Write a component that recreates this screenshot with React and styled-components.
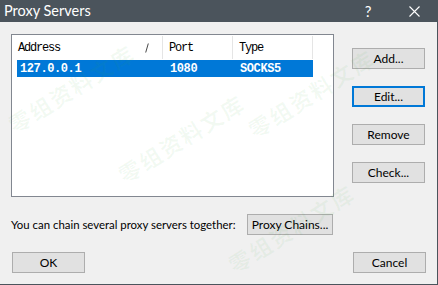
import React from "react";
import styled, { createGlobalStyle } from "styled-components";

const Global = createGlobalStyle`
  html, body { margin: 0; padding: 0; background: #f0f0f0; }
  body { font-family: Lato, "Noto Sans", sans-serif; }
`;

const Window = styled.div`
  position: relative;
  width: 438px;
  height: 285px;
  box-sizing: border-box;
  background: #f0f0f0;
  border-right: 1px solid #4b545c;
  border-bottom: 1px solid #4b545c;
  display: flex;
  flex-direction: column;
  overflow: hidden;
`;

const TitleBar = styled.div`
  height: 22px;
  background: #4b545c;
  color: #fff;
  display: flex;
  align-items: center;
  padding-left: 4px;
  font-family: Lato, "Noto Sans", sans-serif;
  font-size: 14.5px;
  flex-shrink: 0;
`;

const Title = styled.span`
  flex: 1;
  line-height: 22px;
`;

const TitleButton = styled.span`
  width: ${(p) => p.$w}px;
  display: flex;
  justify-content: center;
  align-items: center;
  font-size: 15px;
`;

const Body = styled.div`
  padding: 12px 0 0 11px;
  display: flex;
  flex-direction: column;
`;

const TopRow = styled.div`
  display: flex;
`;

const ListBox = styled.div`
  width: 323px;
  height: 163px;
  box-sizing: border-box;
  border: 1px solid #828790;
  background: #fff;
  padding-left: 5px;
`;

const HeaderRow = styled.div`
  display: flex;
  height: 25px;
`;

const HeaderCell = styled.div`
  position: relative;
  width: ${(p) => p.$w}px;
  box-sizing: border-box;
  padding-left: ${(p) => p.$pl}px;
  border-right: 1px solid #e5e5e5;
  margin-top: 1px;
  height: 23px;
  display: flex;
  align-items: center;
  font-family: "Liberation Mono", monospace;
  font-size: 12px;
  letter-spacing: -1.2px;
  color: #000;
`;

const SortMark = styled.svg`
  position: absolute;
  left: 128px;
  top: 7px;
`;

const DataRow = styled.div`
  display: flex;
  width: 296px;
  height: 17px;
  background: ${(p) => (p.$selected ? "#0078d7" : "transparent")};
  color: ${(p) => (p.$selected ? "#fff" : "#000")};
`;

const DataCell = styled.div`
  width: ${(p) => p.$w}px;
  box-sizing: border-box;
  padding-left: ${(p) => p.$pl}px;
  display: flex;
  align-items: center;
  font-family: "Liberation Mono", monospace;
  font-weight: bold;
  font-size: 12px;
  letter-spacing: -0.4px;
`;

const SideButtons = styled.div`
  display: flex;
  flex-direction: column;
  gap: 17px;
  margin-left: 18px;
  padding-top: 14px;
`;

const Button = styled.div`
  width: ${(p) => p.$w || 73}px;
  height: 21px;
  flex-shrink: 0;
  box-sizing: border-box;
  background: #e1e1e1;
  border: ${(p) => (p.$focused ? "2px solid #0078d7" : "1px solid #adadad")};
  display: flex;
  align-items: center;
  justify-content: center;
  font-family: Lato, "Noto Sans", sans-serif;
  font-size: 12px;
  color: #000;
`;

const ChainRow = styled.div`
  display: flex;
  align-items: center;
  margin-top: 17px;
`;

const ChainText = styled.span`
  font-family: Lato, "Noto Sans", sans-serif;
  font-size: 11.4px;
  color: #000;
  width: 236px;
  flex-shrink: 0;
  white-space: nowrap;
`;

const BottomRow = styled.div`
  display: flex;
  justify-content: space-between;
  margin-top: 17px;
  width: 414px;
  padding-left: 1px;
`;

const Watermark = styled.div`
  position: absolute;
  left: ${(p) => p.$x}px;
  top: ${(p) => p.$y}px;
  transform: rotate(-32deg);
  transform-origin: left center;
  font-family: "Noto Sans CJK SC", sans-serif;
  font-size: 22px;
  font-weight: bold;
  color: rgba(60, 170, 60, 0.06);
  white-space: nowrap;
  pointer-events: none;
  letter-spacing: 2px;
`;

const marks = [
  { x: 10, y: 110 },
  { x: 120, y: 160 },
  { x: 250, y: 115 },
  { x: 230, y: 250 },
];

export default function App() {
  return (
    <>
      <Global />
      <Window>
        <TitleBar>
          <Title>Proxy Servers</Title>
          <TitleButton $w={46}>?</TitleButton>
          <TitleButton $w={46}>
            <svg width="11" height="11" viewBox="0 0 11 11">
              <path d="M0.5 0.5 L10.5 10.5 M10.5 0.5 L0.5 10.5" stroke="#fff" strokeWidth="1.1" />
            </svg>
          </TitleButton>
        </TitleBar>
        <Body>
          <TopRow>
            <ListBox>
              <HeaderRow>
                <HeaderCell $w={146} $pl={1}>
                  Address
                  <SortMark width="4" height="10" viewBox="0 0 4 10">
                    <path d="M3.3 0.5 L0.7 9.5" stroke="#333" strokeWidth="0.9" />
                  </SortMark>
                </HeaderCell>
                <HeaderCell $w={70} $pl={6}>Port</HeaderCell>
                <HeaderCell $w={80} $pl={6}>Type</HeaderCell>
              </HeaderRow>
              <DataRow $selected>
                <DataCell $w={146} $pl={3}>127.0.0.1</DataCell>
                <DataCell $w={70} $pl={7}>1080</DataCell>
                <DataCell $w={80} $pl={7}>SOCKS5</DataCell>
              </DataRow>
            </ListBox>
            <SideButtons>
              <Button>Add...</Button>
              <Button $focused>Edit...</Button>
              <Button>Remove</Button>
              <Button>Check...</Button>
            </SideButtons>
          </TopRow>
          <ChainRow>
            <ChainText>You can chain several proxy servers together:</ChainText>
            <Button $w={86}>Proxy Chains...</Button>
          </ChainRow>
          <BottomRow>
            <Button>OK</Button>
            <Button>Cancel</Button>
          </BottomRow>
        </Body>
        {marks.map((m, i) => (
          <Watermark key={i} $x={m.x} $y={m.y}>零组资料文库</Watermark>
        ))}
      </Window>
    </>
  );
}
